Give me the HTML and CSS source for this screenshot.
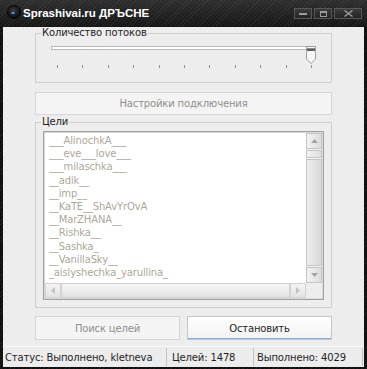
FILE: index.html
```html
<!DOCTYPE html>
<html lang="ru">
<head>
    <meta charset="UTF-8">
    <title>Sprashivai.ru</title>
    <link rel="stylesheet" href="styles.css">
</head>
<body>
    <div class="window">
        <div class="titlebar">
            <svg class="app_icon" width="14" height="14" viewBox="0 0 14 14">
                <defs>
                    <radialGradient id="orb" cx="45%" cy="40%" r="60%">
                        <stop offset="0" stop-color="#3a3d42"/>
                        <stop offset="1" stop-color="#0b0b0c"/>
                    </radialGradient>
                </defs>
                <circle cx="7" cy="7" r="6.5" fill="url(#orb)" stroke="#050505"/>
                <ellipse cx="6" cy="8" rx="2" ry="1" fill="#2f7fc8"/>
                <ellipse cx="6" cy="8" rx="1" ry="0.6" fill="#7cc2ff"/>
            </svg>
            <span class="title">Sprashivai.ru ДРЪСНЕ</span>
            <div class="caption_buttons">
                <span class="cap_btn cap_min">
                    <svg width="8" height="2" viewBox="0 0 8 2"><rect width="8" height="2" fill="#9c9c9c"/></svg>
                </span>
                <span class="cap_btn cap_max">
                    <svg width="7" height="6" viewBox="0 0 7 6"><rect x="0.5" y="0.5" width="6" height="5" fill="none" stroke="#9c9c9c"/><rect x="0" y="0" width="7" height="2" fill="#9c9c9c"/></svg>
                </span>
                <span class="cap_btn cap_close">
                    <svg width="9" height="7" viewBox="0 0 9 7"><path d="M0.5 0.5 L8.5 6.5 M8.5 0.5 L0.5 6.5" stroke="#9c9c9c" stroke-width="1.4"/></svg>
                </span>
            </div>
        </div>

        <div class="client">
            <!-- threads -->
            <fieldset class="group threads">
                <legend>Количество потоков</legend>
                <div class="slider">
                    <div class="track"></div>
                    <svg class="thumb" width="10" height="18" viewBox="0 0 10 18">
                        <path d="M0.5 0.5 H9.5 V13 L5 17.5 L0.5 13 Z" fill="#f7f7f7" stroke="#9d9d9d"/>
                        <rect x="1" y="2" width="8" height="1" fill="#8a8a8a"/>
                        <rect x="1" y="3" width="8" height="2" fill="#5e5e5e"/>
                    </svg>
                </div>
                <div class="ticks">
                    <span class="tick"></span><span class="tick"></span><span class="tick"></span>
                    <span class="tick"></span><span class="tick"></span><span class="tick"></span>
                    <span class="tick"></span><span class="tick"></span><span class="tick"></span>
                    <span class="tick"></span><span class="tick"></span>
                </div>
            </fieldset>

            <button class="btn btn_disabled btn_settings">Настройки подключения</button>

            <!-- targets -->
            <fieldset class="group targets">
                <legend>Цели</legend>
                <div class="listbox">
                    <div class="list_row">
                        <div class="items">
                            <div>___AlinochkA___</div>
                            <div>___eve___love___</div>
                            <div>___milaschka___</div>
                            <div>__adik__</div>
                            <div>__imp__</div>
                            <div>__KaTE__ShAvYrOvA</div>
                            <div>__MarZHANA__</div>
                            <div>__Rishka__</div>
                            <div>__Sashka_</div>
                            <div>__VanillaSky__</div>
                            <div>_aislyshechka_yarullina_</div>
                        </div>
                        <div class="vscroll">
                            <div class="sb_btn">
                                <svg width="7" height="4" viewBox="0 0 7 4"><path d="M3.5 0 L7 4 H0 Z" fill="#a3a3a3"/></svg>
                            </div>
                            <div class="sb_thumb_v"></div>
                            <div class="sb_track_v"></div>
                            <div class="sb_btn">
                                <svg width="7" height="4" viewBox="0 0 7 4"><path d="M0 0 H7 L3.5 4 Z" fill="#a3a3a3"/></svg>
                            </div>
                        </div>
                    </div>
                    <div class="hscroll_row">
                        <div class="sb_btn sb_btn_h">
                            <svg width="4" height="7" viewBox="0 0 4 7"><path d="M4 0 V7 L0 3.5 Z" fill="#c2c2c2"/></svg>
                        </div>
                        <div class="sb_track_h"></div>
                        <div class="sb_btn sb_btn_h">
                            <svg width="4" height="7" viewBox="0 0 4 7"><path d="M0 0 V7 L4 3.5 Z" fill="#c2c2c2"/></svg>
                        </div>
                        <div class="sb_corner"></div>
                    </div>
                </div>
            </fieldset>

            <div class="actions">
                <button class="btn btn_disabled">Поиск целей</button>
                <button class="btn btn_active">Остановить</button>
            </div>
        </div>

        <div class="statusbar">
            <span class="panel panel_status">Статус: Выполнено, kletneva</span>
            <span class="panel panel_targets">Целей: 1478</span>
            <span class="panel panel_done">Выполнено: 4029</span>
        </div>
    </div>
</body>
</html>
```

FILE: styles.css
```css
/*tag*/
body{
    margin: 0;
    font-family: "DejaVu Sans", sans-serif;
    font-size: 10px;
    letter-spacing: -0.15px;
    color: #1f1f1f;
}

/*window frame*/
.window{
    width: 367px;
    height: 369px;
    box-sizing: border-box;
    padding: 0 3px 2px 3px;
    display: flex;
    flex-direction: column;
    background-color: #0e0e0e;
    background-image:
        linear-gradient(to bottom, rgba(255,255,255,0.13), rgba(255,255,255,0.03) 26px, rgba(0,0,0,0) 27px),
        repeating-linear-gradient(135deg, #1c1c1c 0 1px, #0f0f0f 1px 3px);
}
.titlebar{
    height: 27px;
    flex: none;
    display: flex;
    align-items: flex-start;
    margin: 0 -3px;
    padding: 0 5px 0 7px;
}
.app_icon{
    margin-top: 5px;
    flex: none;
}
.title{
    margin: 6px 0 0 2px;
    color: #fff;
    font-family: "Liberation Sans", sans-serif;
    font-weight: bold;
    font-size: 11.5px;
    letter-spacing: 0;
    line-height: 14px;
}
.caption_buttons{
    margin: 8px 0 0 auto;
    display: flex;
    gap: 2px;
}
.cap_btn{
    height: 11px;
    width: 18px;
    box-sizing: border-box;
    border: 1px solid #575757;
    background: linear-gradient(#3b3b3b, #242424);
    display: flex;
    align-items: center;
    justify-content: center;
}
.cap_close{
    width: 28px;
}

/*client*/
.client{
    flex: 1;
    background: #ededed;
    display: flex;
    flex-direction: column;
    padding: 0 32px;
}
.group{
    margin: 0;
    padding: 0;
    border: 1px solid #cfcfcf;
    min-width: 0;
}
.group legend{
    margin-left: 5px;
    padding: 0 1px;
    line-height: 12px;
}

/*slider*/
.slider{
    position: relative;
    margin: 7px 0 0 15px;
    width: 265px;
    height: 17px;
}
.track{
    margin-top: 6px;
    height: 2px;
    border: 1px solid #b9b9b9;
    background: #fff;
}
.thumb{
    position: absolute;
    right: 0;
    top: 0;
}
.ticks{
    display: flex;
    justify-content: space-between;
    width: 255px;
    height: 3px;
    margin: 2px 0 14px 21px;
}
.tick{
    width: 1px;
    background: #8c8c8c;
}

/*buttons*/
.btn{
    font-family: "DejaVu Sans", sans-serif;
    font-size: 10px;
    letter-spacing: -0.15px;
    height: 23px;
    padding: 0;
    box-sizing: border-box;
    border-radius: 0;
    border: 1px solid #d6d6d6;
}
.btn_disabled{
    background: #f4f4f4;
    color: #8e8e8e;
}
.btn_active{
    background: linear-gradient(#ffffff, #f2f2f2);
    border-color: #c6c6c6;
    color: #1f1f1f;
    box-shadow: inset 0 -1px 0 #7eaedc;
}
.btn_settings{
    margin: 9px 0 1px 0;
}
.actions{
    display: flex;
    gap: 7px;
    margin-top: 8px;
}
.actions .btn{
    flex: 1;
    height: 24px;
}

/*list*/
.listbox{
    margin: 3px 7px 7px 7px;
    height: 169px;
    box-sizing: border-box;
    border: 1px solid #9f9f9f;
    padding: 1px;
    background: #dadada;
    display: flex;
    flex-direction: column;
}
.list_row{
    display: flex;
    height: 150px;
}
.items{
    flex: 1;
    background: #fff;
    padding: 1px 0 0 4px;
    color: #aca899;
    line-height: 13.2px;
    white-space: nowrap;
    overflow: hidden;
}
.vscroll{
    width: 16px;
    display: flex;
    flex-direction: column;
    gap: 1px;
    background: #f3f3f3;
}
.sb_btn{
    height: 16px;
    flex: none;
    box-sizing: border-box;
    border: 1px solid #c4c4c4;
    background: linear-gradient(to right, #f2f2f2, #dcdcdc);
    display: flex;
    align-items: center;
    justify-content: center;
}
.sb_thumb_v{
    height: 6px;
    border: 1px solid #c4c4c4;
    background: linear-gradient(to right, #f2f2f2, #dedede);
}
.sb_track_v{
    flex: 1;
    border: 1px solid #c4c4c4;
    background: linear-gradient(to right, #ededed, #d8d8d8);
}
.hscroll_row{
    display: flex;
    height: 15px;
    background: #f3f3f3;
}
.sb_btn_h{
    width: 16px;
    height: 15px;
    background: linear-gradient(#f4f4f4, #e3e3e3);
    border-color: #d2d2d2;
}
.sb_track_h{
    flex: 1;
    border: 1px solid #d2d2d2;
    background: linear-gradient(#f6f6f6, #e2e2e2);
}
.sb_corner{
    width: 16px;
    background: #ededed;
}

/*status bar*/
.statusbar{
    height: 21px;
    flex: none;
    box-sizing: border-box;
    border-top: 1px solid #f8f8f8;
    background: #ececec;
    display: flex;
    line-height: 19px;
}
.panel{
    box-sizing: border-box;
    border-right: 1px solid #c3c3c3;
    margin: 1px 0;
    white-space: nowrap;
    overflow: hidden;
}
.panel_status{
    width: 164px;
    padding-left: 2px;
}
.panel_targets{
    width: 87px;
    padding-left: 5px;
}
.panel_done{
    width: 109px;
    padding-left: 3px;
}
```
